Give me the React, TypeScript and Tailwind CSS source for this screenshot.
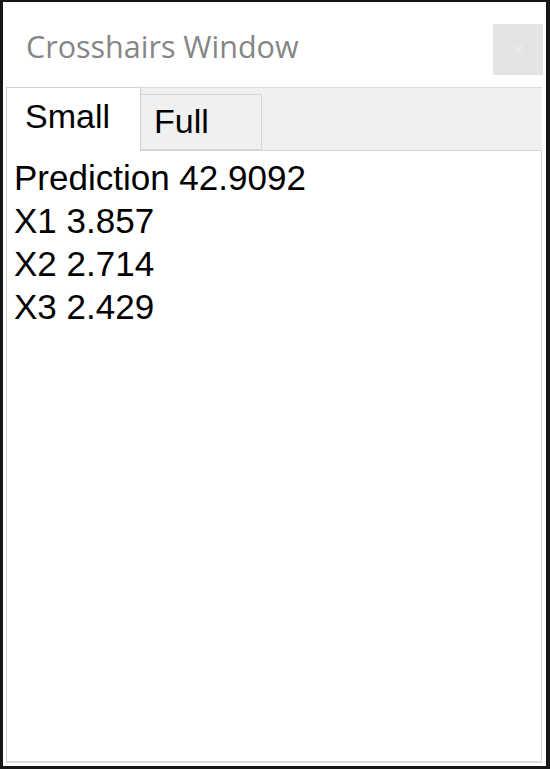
import React from "react";

export default function App() {
  const lines = ["Prediction 42.9092", "X1 3.857", "X2 2.714", "X3 2.429"];
  return (
    <div className="w-[550px] h-[769px] bg-[#161616] pl-[3px] pt-[2px] pr-[4px] pb-[3px]">
      <div className="w-full h-full bg-white flex flex-col">
        {/* title bar */}
        <div className="h-[85px] shrink-0 flex items-start justify-between pl-[23px] pr-[3px]">
          <div
            className="mt-[26px] text-[30.5px] leading-[36px] text-[#868686]"
            style={{ fontFamily: '"Open Sans", sans-serif' }}
          >
            Crosshairs Window
          </div>
          <div className="mt-[22px] w-[50px] h-[51px] bg-[#e4e4e4] flex items-center justify-center">
            <svg width="12" height="12" viewBox="0 0 12 12">
              <path d="M1 1 L11 11 M11 1 L1 11" stroke="#ebebeb" strokeWidth="1.5" />
            </svg>
          </div>
        </div>
        {/* tabs + panel */}
        <div
          className="flex-1 flex flex-col ml-[3px] mr-[4px] mb-[3px]"
          style={{ fontFamily: '"Liberation Sans", Arial, sans-serif' }}
        >
          <div className="h-[63px] shrink-0 bg-[#f0f0f0] border-t border-[#dadada] flex items-end">
            <div className="relative z-10 w-[135px] h-[64px] -mt-px bg-white border-t border-l border-r border-[#d0d0d0] pl-[18px] pt-[8px] text-[34px] leading-[40px] text-black self-start -mb-px">
              Small
            </div>
            <div className="w-[121px] h-[56px] bg-[#f0f0f0] border-t border-r border-b border-[#d6d6d6] pl-[13px] pt-[6px] text-[34px] leading-[40px] text-black">
              Full
            </div>
          </div>
          <div className="flex-1 bg-white border border-[#d6d6d6] border-b-2 border-b-[#dcdcdc] pl-[7px] pt-[5px] text-[35px] leading-[43px] text-black">
            {lines.map((l) => (
              <div key={l}>{l}</div>
            ))}
          </div>
        </div>
      </div>
    </div>
  );
}
